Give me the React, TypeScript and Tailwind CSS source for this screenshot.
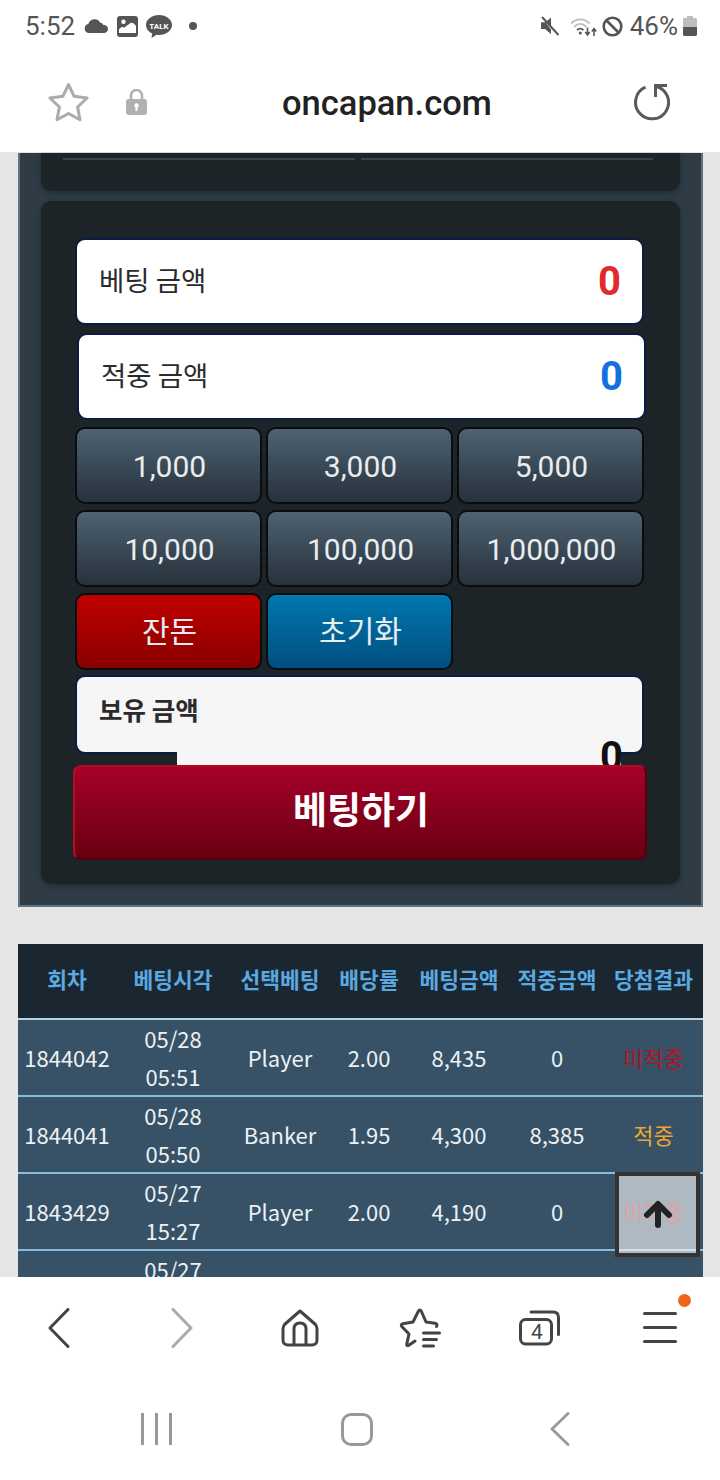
const KR = "font-['Noto_Sans_CJK_KR',sans-serif]";

const AMOUNTS = ["1,000", "3,000", "5,000", "10,000", "100,000", "1,000,000"];

interface BetRow {
  round: string;
  date: string;
  time: string;
  pick: string;
  odds: string;
  bet: string;
  win: string;
  result: string;
  resultClass: string;
}

const ROWS: BetRow[] = [
  { round: "1844042", date: "05/28", time: "05:51", pick: "Player", odds: "2.00", bet: "8,435", win: "0", result: "미적중", resultClass: "text-[#b5121f]" },
  { round: "1844041", date: "05/28", time: "05:50", pick: "Banker", odds: "1.95", bet: "4,300", win: "8,385", result: "적중", resultClass: "text-[#eea62c]" },
  { round: "1843429", date: "05/27", time: "15:27", pick: "Player", odds: "2.00", bet: "4,190", win: "0", result: "미적중", resultClass: "text-[#b5121f]" },
];

const HEADERS = ["회차", "베팅시각", "선택베팅", "배당률", "베팅금액", "적중금액", "당첨결과"];
const COL_WIDTHS = [98, 114, 100, 78, 102, 94, 99];

function StatusBar() {
  return (
    <div className="flex h-[52px] items-center bg-white pl-[25px] pr-[23px] font-['Roboto',sans-serif] text-[#555555]">
      <span className="text-[26px] leading-none">5:52</span>
      <svg className="ml-[9px]" width="24" height="14" viewBox="0 0 24 14">
        <path d="M5 14a4.6 4.6 0 0 1-.6-9.1A6.3 6.3 0 0 1 16 3.6a3.9 3.9 0 0 1 3.4 2.5A4 4 0 0 1 24 10c0 2.3-1.700 4-4 4Z" fill="#555" />
      </svg>
      <svg className="ml-[9px]" width="21" height="21" viewBox="0 0 21 21">
        <rect width="21" height="21" rx="3" fill="#555" />
        <path d="M2 17v-3.500c2-2.500 3.500-3 5-1.800L13.500 7c1.700-.8 3.500.4 5.500 3v7Z" fill="#fff" />
        <circle cx="6.500" cy="5.800" r="2.200" fill="#fff" />
      </svg>
      <svg className="ml-[8px]" width="26" height="23" viewBox="0 0 26 23">
        <path d="M13 0C5.800 0 0 4.500 0 10c0 3.600 2.500 6.800 6.200 8.600L5.500 23l5-3.300c.8.100 1.700.200 2.500.200 7.200 0 13-4.400 13-9.900S20.200 0 13 0Z" fill="#555" />
        <text x="13" y="13.500" textAnchor="middle" fontSize="8" fontWeight="700" fill="#fff" fontFamily="Roboto, sans-serif">TALK</text>
      </svg>
      <span className="ml-[17px] h-2 w-2 rounded-full bg-[#555555]" />
      <svg className="ml-auto" width="20" height="20" viewBox="0 0 20 20">
        <path d="M1 6.500h4L11 1.500v10L7 7.500M1 6.500v6h4l6 5v-4" fill="#555" />
        <path d="M1 6.500h4.500l5.500 7v4.500l-6-5H1Z" fill="#555" />
        <path d="M2 1l16.500 18" stroke="#555" strokeWidth="2" />
      </svg>
      <svg className="ml-[10px]" width="27" height="21" viewBox="0 0 27 21" fill="none">
        <path d="M1 7.500C6.500 2 14 2 19.500 7.500" stroke="#bdbdbd" strokeWidth="1.800" />
        <path d="M4 10.800c4-3.700 8.500-3.700 12.500 0" stroke="#bdbdbd" strokeWidth="1.800" />
        <path d="M7 14c2.300-2 4.200-2 6.500 0" stroke="#555" strokeWidth="1.800" />
        <circle cx="10.300" cy="17" r="1.500" fill="#555" />
        <path d="M17.500 11.500v7M15.300 16l2.200 3 2.200-3" stroke="#555" strokeWidth="1.600" />
        <path d="M24 20v-7M21.800 15.500l2.200-3 2.200 3" stroke="#555" strokeWidth="1.600" />
      </svg>
      <svg className="ml-[5px]" width="21" height="21" viewBox="0 0 21 21" fill="none">
        <circle cx="10.500" cy="10.500" r="8.800" stroke="#555" strokeWidth="2.600" />
        <path d="M4.500 4.500l12 12" stroke="#555" strokeWidth="2.600" />
      </svg>
      <span className="ml-[7px] text-[26px] leading-none">46%</span>
      <svg className="ml-[5px]" width="14" height="20" viewBox="0 0 14 20">
        <path d="M4 0h6v2h2.500c.8 0 1.500.7 1.500 1.500V11H0V3.500C0 2.700.7 2 1.500 2H4Z" fill="#bdbdbd" />
        <path d="M0 11h14v7.500c0 .8-.7 1.500-1.500 1.500h-11C.7 20 0 19.300 0 18.500Z" fill="#555" />
      </svg>
    </div>
  );
}

function UrlBar() {
  return (
    <div className="flex h-[100px] items-center bg-white">
      <svg className="ml-[47px]" width="43" height="40" viewBox="0 0 43 40" fill="none">
        <path d="M21.500 2.500l5.600 11.800 13 1.700-9.500 9 2.400 12.800-11.500-6.300-11.500 6.300 2.400-12.800-9.500-9 13-1.700Z" stroke="#ababab" strokeWidth="3" strokeLinejoin="round" />
      </svg>
      <svg className="ml-[36px]" width="21" height="26" viewBox="0 0 21 26">
        <path d="M5 11V6.500a5.500 5.500 0 0 1 11 0V11" fill="none" stroke="#b0b0b0" strokeWidth="2.600" />
        <rect y="10" width="21" height="16" rx="3" fill="#b0b0b0" />
        <circle cx="10.500" cy="16.500" r="2.200" fill="#fff" />
        <rect x="9.500" y="17" width="2" height="5" fill="#fff" />
      </svg>
      <span className="ml-[135px] mt-[3px] font-['Roboto',sans-serif] text-[34.5px] font-medium leading-none text-[#222222]">
        oncapan.com
      </span>
      <svg className="ml-auto mr-[50px]" width="38" height="38" viewBox="0 0 38 38" fill="none">
        <path d="M13.500 4.200A16.500 16.500 0 1 0 23.500 3.200" stroke="#5a5a5a" strokeWidth="3" />
        <path d="M35 2.500H23.500V14" stroke="#5a5a5a" strokeWidth="3" />
      </svg>
    </div>
  );
}

function AmountField({ label, value, valueClass, className }: { label: string; value: string; valueClass: string; className: string }) {
  return (
    <div className={`flex h-[87px] w-[569px] items-center justify-between rounded-[10px] border-2 border-[#0b1b45] bg-white pl-[22px] pr-[21px] ${className}`}>
      <span className={`${KR} mb-[4px] text-[27.5px] leading-none text-[#2b2b2b]`}>{label}</span>
      <span className={`font-['Roboto',sans-serif] text-[40px] font-bold leading-none ${valueClass}`}>{value}</span>
    </div>
  );
}

function AmountButton({ label, tone }: { label: string; tone: string }) {
  return (
    <button className={`flex h-[77px] items-center justify-center rounded-[10px] border-2 border-[#0a0d10] text-[30px] leading-none text-[#e9edf0] ${tone}`}>
      {label}
    </button>
  );
}

function BetPanel() {
  return (
    <div className="ml-[18px] w-[685px] border-x-2 border-b-2 border-[#5f7282] bg-[#2f3c46] px-[21px] pb-[21px]">
      <div className="flex h-[38px] gap-[6px] rounded-b-[10px] bg-[#1d2428] px-[22px] pt-[5px] shadow-[0_2px_6px_rgba(0,0,0,0.3)]">
        <div className="h-[2px] w-[292px] bg-[#36444e]" />
        <div className="h-[2px] w-[292px] bg-[#36444e]" />
      </div>
      <div className="mt-[10px] h-[683px] rounded-[10px] bg-[#1d2428] pt-[37px] shadow-[0_2px_6px_rgba(0,0,0,0.3)]">
        <AmountField label="베팅 금액" value="0" valueClass="text-[#e12b2b]" className="ml-[34px]" />
        <AmountField label="적중 금액" value="0" valueClass="text-[#1370e0]" className="ml-[36px] mt-[8px]" />
        <div className="ml-[34px] mt-[7px] grid w-[569px] grid-cols-3 gap-x-[4px] gap-y-[6px] font-['Roboto',sans-serif]">
          {AMOUNTS.map((amount) => (
            <AmountButton key={amount} label={amount} tone="bg-gradient-to-b from-[#4e6272] to-[#27323c] pl-[2px] pt-[2px]" />
          ))}
          <AmountButton label="잔돈" tone={`${KR} bg-gradient-to-b from-[#c00000] to-[#8a0000] pb-[5px] pl-[2px]`} />
          <AmountButton label="초기화" tone={`${KR} bg-gradient-to-b from-[#0078b0] to-[#004f80] pb-[5px] pl-[2px]`} />
        </div>
        <div className="ml-[34px] mt-[5px] flex h-[79px] w-[569px] rounded-[10px] border-2 border-[#0b1b45] bg-[#f6f6f7]">
          <span className={`${KR} absolute ml-[22px] mt-[19px] text-[25.5px] font-bold leading-none text-[#2b2b2b]`}>보유 금액</span>
          <div className="ml-[100px] flex h-[88px] w-[444px] shrink-0 justify-end bg-[#f6f6f7] pr-[-1px] pt-[60px] font-['Roboto',sans-serif] text-[40px] font-bold leading-none text-[#111111]">
            <span className="translate-x-[2px]">0</span>
          </div>
        </div>
        <button className={`${KR} relative ml-[32px] mt-[11px] flex h-[95px] w-[574px] items-center justify-center rounded-[8px] border-2 border-[#55000f] border-t-[#b00a20] border-l-[#b01020] bg-gradient-to-b from-[#a80028] to-[#680012] pb-[8px] pl-[2px] text-[37px] font-bold leading-none text-white`}>
          베팅하기
        </button>
      </div>
    </div>
  );
}

function HistoryTable() {
  return (
    <table className={`${KR} ml-[18px] mt-[37px] w-[685px] table-fixed border-collapse text-center`}>
      <colgroup>
        {COL_WIDTHS.map((width, i) => (
          <col key={i} style={{ width }} />
        ))}
      </colgroup>
      <thead>
        <tr className="h-[75px] border-b-2 border-[#b4d3e6] bg-[#1a2630]">
          {HEADERS.map((header) => (
            <th key={header} className="whitespace-nowrap p-0 pb-[3px] text-[21.5px] font-bold text-[#5aa9e0]">
              {header}
            </th>
          ))}
        </tr>
      </thead>
      <tbody className="text-[22px] text-[#edf1f4]">
        {ROWS.map((row) => (
          <tr key={row.round} className="h-[75px] border-b-2 border-[#8abcd9] bg-[#375166]">
            <td className="p-0">{row.round}</td>
            <td className="p-0 leading-[37.5px]">
              <div>{row.date}</div>
              <div>{row.time}</div>
            </td>
            <td className="p-0">{row.pick}</td>
            <td className="p-0">{row.odds}</td>
            <td className="p-0">{row.bet}</td>
            <td className="p-0">{row.win}</td>
            <td className={`p-0 ${row.resultClass}`}>{row.result}</td>
          </tr>
        ))}
        <tr className="h-[75px] bg-[#375166] align-top">
          <td className="p-0" />
          <td className="p-0 leading-[37.5px]">05/27</td>
          <td className="p-0" colSpan={5} />
        </tr>
      </tbody>
    </table>
  );
}

function BottomBar() {
  return (
    <div className="bg-white">
      <div className="grid h-[101px] grid-cols-6 place-items-center">
        <svg className="mr-[3px]" width="22" height="40" viewBox="0 0 22 40" fill="none">
          <path d="M20 1.500L2 20l18 18.500" stroke="#444" strokeWidth="3" strokeLinecap="round" strokeLinejoin="round" />
        </svg>
        <svg className="ml-[4px]" width="22" height="40" viewBox="0 0 22 40" fill="none">
          <path d="M2 1.500L20 20 2 38.500" stroke="#aaaaaa" strokeWidth="3" strokeLinecap="round" strokeLinejoin="round" />
        </svg>
        <svg width="38" height="38" viewBox="0 0 38 38" fill="none">
          <path d="M19 2L3.500 15.500C2.500 17 2 18 2 20v11c0 3 2 5 5 5h24c3 0 5-2 5-5V20c0-2-.5-3-1.500-4.500Z" stroke="#444" strokeWidth="3" strokeLinejoin="round" />
          <path d="M13 36V20c0-4 2.500-6 6-6s6 2 6 6v16" stroke="#444" strokeWidth="3" />
        </svg>
        <svg width="42" height="40" viewBox="0 0 42 40" fill="none">
          <path d="M16 33L9.500 37.500c-1 .5-2 0-1.800-1.200L10 26 2.800 18.500c-1-1.200-.5-2.500 1-2.800L14 14 19.500 3c.7-1.300 2-1.300 2.700 0L27 14l9 1.300c2 .3 2.500 1.700 1.500 3.200" stroke="#444" strokeWidth="3" strokeLinecap="round" strokeLinejoin="round" />
          <path d="M24.500 25h16M24.500 31.500h13M24.500 38h10" stroke="#444" strokeWidth="3" strokeLinecap="round" />
        </svg>
        <div className="relative h-[36px] w-[44px]">
          <svg className="absolute inset-0" width="44" height="36" viewBox="0 0 44 36" fill="none">
            <rect x="2.500" y="9.500" width="31" height="24.500" rx="5" stroke="#444" strokeWidth="3" />
            <path d="M13 2h22c3.500 0 5.500 2 5.500 5.500v17" stroke="#444" strokeWidth="3" strokeLinecap="round" />
          </svg>
          <span className="absolute left-[13px] top-[11px] font-['Roboto',sans-serif] text-[21px] leading-[22px] text-[#444444]">4</span>
        </div>
        <div className="relative flex w-[34px] flex-col gap-[11px]">
          <span className="h-[3px] rounded-full bg-[#444444]" />
          <span className="h-[3px] rounded-full bg-[#444444]" />
          <span className="h-[3px] rounded-full bg-[#444444]" />
          <span className="absolute left-[35px] top-[-18px] h-[13px] w-[13px] rounded-full bg-[#ee6418]" />
        </div>
      </div>
      <div className="flex h-[102px] items-center pl-[141px]">
        <div className="flex w-[31px] justify-between">
          <span className="h-[32px] w-[3px] bg-[#999999]" />
          <span className="h-[32px] w-[3px] bg-[#999999]" />
          <span className="h-[32px] w-[3px] bg-[#999999]" />
        </div>
        <div className="ml-[169px] h-[33px] w-[32px] rounded-[10px] border-[3px] border-[#999999]" />
        <svg className="ml-[177px]" width="20" height="34" viewBox="0 0 20 34" fill="none">
          <path d="M18 1.500L2 17l16 15.500" stroke="#999" strokeWidth="2.800" strokeLinecap="round" strokeLinejoin="round" />
        </svg>
      </div>
    </div>
  );
}

export default function App() {
  return (
    <div className="relative h-[1480px] w-[720px] overflow-hidden bg-white font-['Roboto',sans-serif]">
      <StatusBar />
      <UrlBar />
      <main className="relative h-[1125px] overflow-hidden bg-[#e5e5e5] pt-px">
        <BetPanel />
        <HistoryTable />
        <button className="absolute left-[615px] top-[1020px] flex h-[85px] w-[85px] items-center justify-center border-4 border-[#333333] bg-[#ffffff99]">
          <svg className="mt-[-1px]" width="30" height="28" viewBox="0 0 30 28" fill="none">
            <path d="M15 25V5M4 15L15 4l11 11" stroke="#222" strokeWidth="6" strokeLinecap="round" strokeLinejoin="round" />
          </svg>
        </button>
      </main>
      <BottomBar />
    </div>
  );
}
